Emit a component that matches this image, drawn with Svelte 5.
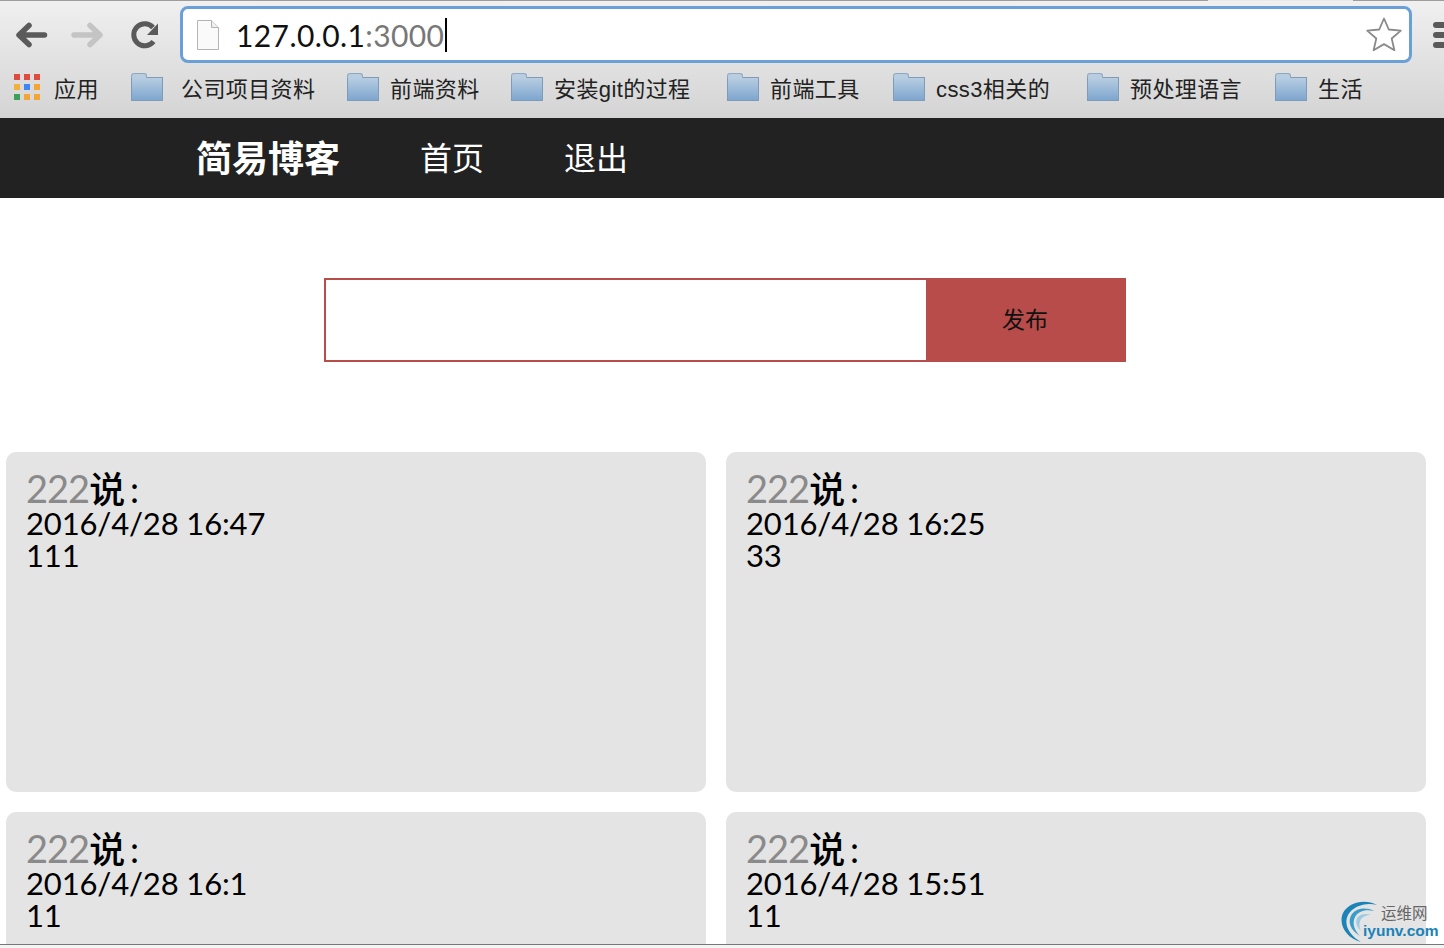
<script>
	const bookmarks = [
		{ name: '公司项目资料', width: 216, gap: 18 },
		{ name: '前端资料', width: 164, gap: 11 },
		{ name: '安装git的过程', width: 216, gap: 11 },
		{ name: '前端工具', width: 166, gap: 11 },
		{ name: 'css3相关的', width: 194, gap: 11 },
		{ name: '预处理语言', width: 188, gap: 11 },
		{ name: '生活', width: 100, gap: 11 }
	];
	const posts = [
		{ user: '222', time: '2016/4/28 16:47', body: '111' },
		{ user: '222', time: '2016/4/28 16:25', body: '33' },
		{ user: '222', time: '2016/4/28 16:1', body: '11' },
		{ user: '222', time: '2016/4/28 15:51', body: '11' }
	];
	const appColors = ['#e04a3f', '#e04a3f', '#e04a3f', '#f3b03b', '#4285f4', '#f3a535', '#3e9f5a', '#f3a535', '#f3a535'];
</script>

<div class="page">
	<header class="chrome">
		<div class="toolbar">
			<svg class="nav-icon" width="36" height="36" viewBox="0 0 36 36">
				<path d="M30.500 18H7M15 8.500L5 18l10 9.500" fill="none" stroke="#5a5a5a" stroke-width="5.500" stroke-linejoin="round" stroke-linecap="round" />
			</svg>
			<svg class="nav-icon" width="36" height="36" viewBox="0 0 36 36">
				<path d="M3 18h24M19 8.500L29 18l-10 9.500" fill="none" stroke="#c4c4c4" stroke-width="5.500" stroke-linejoin="round" stroke-linecap="round" />
			</svg>
			<svg class="nav-icon reload" width="36" height="36" viewBox="0 0 36 36">
				<path d="M25.500 24.500A11 11 0 1 1 25 10.500" fill="none" stroke="#5a5a5a" stroke-width="5" />
				<path d="M30 6.500V18H19z" fill="#5a5a5a" />
			</svg>
			<div class="omnibox">
				<svg width="24" height="32" viewBox="0 0 24 32" class="page-icon">
					<path d="M1.500 1.500h14l7 7v22h-21z" fill="#fafafa" stroke="#b4b4b4" />
					<path d="M15.500 1.500v7h7" fill="#eee" stroke="#b4b4b4" />
				</svg>
				<span class="url">127.0.0.1<span class="port">:3000</span></span>
				<span class="caret"></span>
				<svg class="star" width="38" height="36" viewBox="0 0 38 36">
					<path d="M19 2.500l4.800 11 12 1.100-9.100 7.900 2.700 11.700L19 28.100 8.600 34.200l2.700-11.700-9.100-7.900 12-1.100z" fill="#fff" stroke="#8a8a8a" stroke-width="1.800" stroke-linejoin="round" />
				</svg>
			</div>
			<div class="menu"><span></span><span></span><span></span></div>
		</div>
		<div class="bookmarks">
			<div class="bookmark apps">
				<div class="app-grid">
					{#each appColors as c}
						<i style="background: {c}"></i>
					{/each}
				</div>
				<span>应用</span>
			</div>
			{#each bookmarks as b}
				<div class="bookmark" style="width: {b.width}px; gap: {b.gap}px">
					<div class="folder"></div>
					<span>{b.name}</span>
				</div>
			{/each}
		</div>
	</header>

	<nav class="topnav">
		<span class="brand">简易博客</span>
		<span class="link">首页</span>
		<span class="link">退出</span>
	</nav>

	<form class="publish">
		<input type="text" />
		<button type="button">发布</button>
	</form>

	<section class="posts">
		{#each posts as p}
			<article class="post">
				<div class="head"><span class="user">{p.user}</span>说<span class="colon">:</span></div>
				<div class="time">{p.time}</div>
				<div class="body">{p.body}</div>
			</article>
		{/each}
	</section>

	<div class="watermark">
		<svg width="42" height="44" viewBox="0 0 42 44">
			<path d="M21 42C6 38 -2 24 3 13 8 3 24 -2 37 5 26 2 13 6 8 15 3 25 10 36 21 42z" fill="#1c83b6" />
			<path d="M20 36C10 30 7 21 12 14 17 8 26 7 34 11 26 9 18 11 15 17 12 23 14 30 20 36z" fill="#3c9cc8" />
			<path d="M21 31C16 26 15 21 18 17 21 14 26 13 31 15 26 15 22 17 20.500 20 19 24 19 27 21 31z" fill="#9bcbe2" />
		</svg>
		<span class="wm-cn">运维网</span>
		<span class="wm-en">iyunv.com</span>
	</div>
	<div class="bottom-line"></div>
</div>

<style>
	:global(body) {
		margin: 0;
		background: #fff;
	}
	.page {
		position: relative;
		width: 1444px;
		height: 948px;
		overflow: hidden;
		font-family: "Lato", "Noto Sans CJK SC", sans-serif;
		color: #000;
	}
	.chrome {
		height: 118px;
		padding-top: 1px;
		box-sizing: border-box;
		background:
			linear-gradient(90deg, #9c9c9c 1208px, #e8e8e8 1208px, #e8e8e8 1353px, #9c9c9c 1353px) top / 100% 1px no-repeat,
			linear-gradient(#f0f0f0, #d4d4d4);
		font-family: "Noto Sans CJK SC", sans-serif;
	}
	.toolbar {
		height: 67px;
		display: flex;
		align-items: center;
		padding-left: 14px;
		box-sizing: border-box;
	}
	.nav-icon {
		margin-right: 21px;
		flex: none;
	}
	.reload {
		margin-right: 16px;
	}
	.omnibox {
		width: 1232px;
		height: 57px;
		box-sizing: border-box;
		border: 3px solid #6b9fd8;
		border-radius: 8px;
		background: #fff;
		display: flex;
		align-items: center;
		padding-left: 13px;
		flex: none;
	}
	.page-icon {
		flex: none;
	}
	.url {
		margin-left: 16px;
		font-family: "Lato", sans-serif;
		font-size: 30px;
		letter-spacing: 0.4px;
		color: #111;
	}
	.port {
		color: #777;
	}
	.caret {
		width: 2px;
		height: 34px;
		margin-left: 1px;
		background: #000;
	}
	.star {
		margin-left: auto;
		margin-right: 6px;
		margin-bottom: 2px;
	}
	.menu {
		margin-left: 21px;
		display: flex;
		flex-direction: column;
		gap: 4px;
		width: 12px;
	}
	.menu span {
		display: block;
		width: 14px;
		height: 6px;
		border-radius: 3px 0 0 3px;
		background: #5a5a5a;
	}
	.bookmarks {
		height: 50px;
		display: flex;
		align-items: center;
		padding-left: 14px;
		padding-bottom: 12px;
		box-sizing: border-box;
		font-family: "Liberation Sans", "Noto Sans CJK SC", sans-serif;
		font-size: 22px;
		letter-spacing: 0.4px;
		color: #222;
	}
	.bookmark {
		display: flex;
		align-items: center;
		flex: none;
	}
	.apps {
		width: 117px;
		gap: 14px;
	}
	.app-grid {
		display: grid;
		grid-template-columns: repeat(3, 6px);
		grid-auto-rows: 6px;
		gap: 4px;
	}
	.folder {
		position: relative;
		width: 32px;
		height: 24px;
		flex: none;
		margin-top: 4px;
		box-sizing: border-box;
		border: 1px solid #7f9bb8;
		background: linear-gradient(#b7cde2, #7ea6cf);
	}
	.folder::before {
		content: '';
		position: absolute;
		left: -1px;
		top: -5px;
		width: 14px;
		height: 4px;
		border: 1px solid #8fa9c2;
		border-bottom: none;
		border-radius: 3px 3px 0 0;
		background: #b9cde0;
	}
	.topnav {
		height: 80px;
		box-sizing: border-box;
		padding: 0 0 5px 196px;
		background: #222;
		display: flex;
		align-items: center;
		color: #fff;
		font-family: "Noto Sans CJK SC", sans-serif;
	}
	.brand {
		font-size: 36px;
		font-weight: 700;
		width: 224px;
	}
	.link {
		font-size: 32px;
		width: 144px;
	}
	.publish {
		display: flex;
		width: 802px;
		margin: 80px 0 90px 324px;
		height: 84px;
	}
	.publish input {
		flex: 1;
		min-width: 0;
		box-sizing: border-box;
		border: 2px solid #b84c4a;
		border-right: none;
		outline: none;
		padding: 0;
		background: #fff;
	}
	.publish button {
		width: 200px;
		border: none;
		padding: 0 2px 5px 0;
		background: #b84c4a;
		color: #111;
		font-family: "Noto Sans CJK SC", sans-serif;
		font-size: 23px;
	}
	.posts {
		display: grid;
		grid-template-columns: 700px 700px;
		gap: 20px;
		padding-left: 6px;
	}
	.post {
		height: 340px;
		box-sizing: border-box;
		padding: 18px 20px;
		background: #e4e4e4;
		border-radius: 10px;
		font-size: 31px;
		font-weight: 400;
		line-height: 32px;
		letter-spacing: -0.15px;
	}
	.head {
		font-size: 36px;
		line-height: 36px;
		font-weight: 500;
	}
	.user {
		color: #8a8a8a;
		font-size: 38px;
		font-weight: 400;
		letter-spacing: -1px;
	}
	.colon {
		margin-left: 5px;
		font-weight: 400;
	}
	.watermark {
		position: absolute;
		left: 1340px;
		top: 900px;
		width: 104px;
		height: 44px;
	}
	.watermark svg {
		position: absolute;
		left: 0;
		top: 0;
	}
	.wm-cn {
		position: absolute;
		left: 41px;
		top: 1px;
		font-size: 15.500px;
		color: #666;
		font-family: "Noto Sans CJK SC", sans-serif;
	}
	.wm-en {
		position: absolute;
		left: 23px;
		top: 22px;
		font-family: "Liberation Sans", sans-serif;
		font-weight: 700;
		font-size: 15.500px;
		color: #1a82b8;
	}
	.bottom-line {
		position: absolute;
		left: 0;
		right: 0;
		bottom: 0;
		height: 4px;
		box-sizing: border-box;
		border-top: 1px solid #777;
		background: #f4f4f4;
	}
</style>
